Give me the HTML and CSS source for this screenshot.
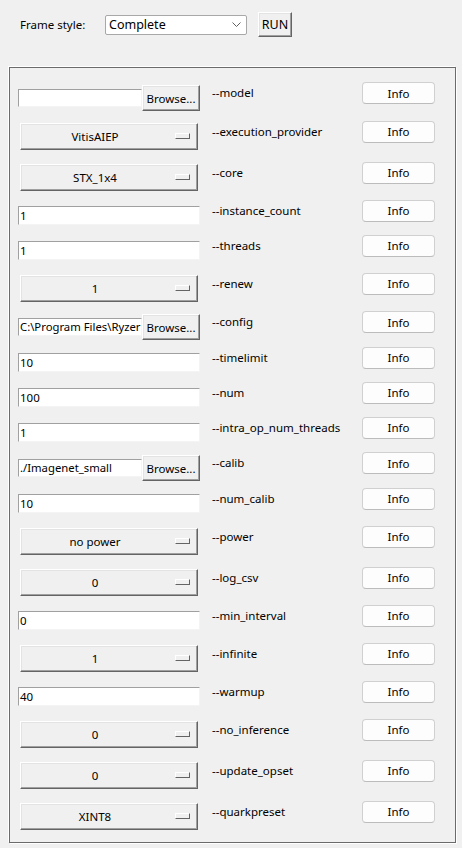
FILE: index.html
```html
<!DOCTYPE html>
<html>
<head>
<meta charset="utf-8">
<link rel="stylesheet" href="styles.css">
</head>
<body>
<div class="header">
  <span class="hlabel">Frame style:</span>
  <div class="combo"><span class="combo-text">Complete</span><svg class="chev" width="9" height="5" viewBox="0 0 9 5"><polyline points="0.5,0.5 4.5,4.5 8.5,0.5" fill="none" stroke="#606060" stroke-width="1"/></svg></div>
  <div class="tkbtn run">RUN</div>
</div>
<div class="frame">
  <div class="row row-b"><div class="left"><div class="filepick"><div class="entry short"></div><div class="tkbtn browse">Browse...</div></div></div><div class="arg">--model</div><div class="info">Info</div></div>
  <div class="row row-o"><div class="left"><div class="optmenu"><span class="opt-text">VitisAIEP</span><span class="ind"></span></div></div><div class="arg">--execution_provider</div><div class="info">Info</div></div>
  <div class="row row-o"><div class="left"><div class="optmenu"><span class="opt-text">STX_1x4</span><span class="ind"></span></div></div><div class="arg">--core</div><div class="info">Info</div></div>
  <div class="row row-e"><div class="left"><div class="entry">1</div></div><div class="arg">--instance_count</div><div class="info">Info</div></div>
  <div class="row row-e"><div class="left"><div class="entry">1</div></div><div class="arg">--threads</div><div class="info">Info</div></div>
  <div class="row row-o"><div class="left"><div class="optmenu"><span class="opt-text">1</span><span class="ind"></span></div></div><div class="arg">--renew</div><div class="info">Info</div></div>
  <div class="row row-b"><div class="left"><div class="filepick"><div class="entry short">C:\Program Files\Ryzer</div><div class="tkbtn browse">Browse...</div></div></div><div class="arg">--config</div><div class="info">Info</div></div>
  <div class="row row-e"><div class="left"><div class="entry">10</div></div><div class="arg">--timelimit</div><div class="info">Info</div></div>
  <div class="row row-e"><div class="left"><div class="entry">100</div></div><div class="arg">--num</div><div class="info">Info</div></div>
  <div class="row row-e"><div class="left"><div class="entry">1</div></div><div class="arg">--intra_op_num_threads</div><div class="info">Info</div></div>
  <div class="row row-b"><div class="left"><div class="filepick"><div class="entry short">./Imagenet_small</div><div class="tkbtn browse">Browse...</div></div></div><div class="arg">--calib</div><div class="info">Info</div></div>
  <div class="row row-e"><div class="left"><div class="entry">10</div></div><div class="arg">--num_calib</div><div class="info">Info</div></div>
  <div class="row row-o"><div class="left"><div class="optmenu"><span class="opt-text">no power</span><span class="ind"></span></div></div><div class="arg">--power</div><div class="info">Info</div></div>
  <div class="row row-o"><div class="left"><div class="optmenu"><span class="opt-text">0</span><span class="ind"></span></div></div><div class="arg">--log_csv</div><div class="info">Info</div></div>
  <div class="row row-e"><div class="left"><div class="entry">0</div></div><div class="arg">--min_interval</div><div class="info">Info</div></div>
  <div class="row row-o"><div class="left"><div class="optmenu"><span class="opt-text">1</span><span class="ind"></span></div></div><div class="arg">--infinite</div><div class="info">Info</div></div>
  <div class="row row-e"><div class="left"><div class="entry">40</div></div><div class="arg">--warmup</div><div class="info">Info</div></div>
  <div class="row row-o"><div class="left"><div class="optmenu"><span class="opt-text">0</span><span class="ind"></span></div></div><div class="arg">--no_inference</div><div class="info">Info</div></div>
  <div class="row row-o"><div class="left"><div class="optmenu"><span class="opt-text">0</span><span class="ind"></span></div></div><div class="arg">--update_opset</div><div class="info">Info</div></div>
  <div class="row row-o"><div class="left"><div class="optmenu"><span class="opt-text">XINT8</span><span class="ind"></span></div></div><div class="arg">--quarkpreset</div><div class="info">Info</div></div>
</div>
</body>
</html>
```

FILE: styles.css
```css
html, body {
  margin: 0;
  padding: 0;
}
body {
  background: #f0f0f0;
  font-family: "Noto Sans", "DejaVu Sans", sans-serif;
  font-size: 11.5px;
  color: #000;
  width: 462px;
  height: 848px;
  overflow: hidden;
}
.header {
  display: flex;
  align-items: center;
  height: 25px;
  margin-top: 12px;
  padding-left: 20px;
}
.hlabel {
  width: 85px;
  line-height: 16px;
}
.combo {
  box-sizing: border-box;
  width: 142px;
  height: 20px;
  background: #fff;
  border: 1px solid #a8a8a8;
  border-radius: 2px;
  display: flex;
  align-items: center;
  padding-left: 3px;
  padding-right: 5px;
}
.combo-text {
  flex: 1;
  font-size: 12.5px;
}
.chev {
  display: block;
}
.tkbtn {
  box-sizing: border-box;
  background: #f0f0f0;
  border: 1px solid;
  border-color: #ffffff #646464 #646464 #ffffff;
  box-shadow: inset -1px -1px 0 #a0a0a0, inset 1px 1px 0 #e3e3e3;
  display: flex;
  align-items: center;
  justify-content: center;
}
.run {
  width: 34px;
  height: 25px;
  margin-left: 11px;
  font-size: 12.5px;
}
.frame {
  box-sizing: border-box;
  margin-top: 30px;
  margin-left: 9px;
  width: 447px;
  height: 776px;
  border: 1px solid #6b6b6b;
  box-shadow: -1px -1px 0 #ffffff, 1px 1px 0 #ffffff;
  padding-top: 7px;
  padding-left: 8px;
}
.row {
  display: flex;
  align-items: center;
}
.row-b { height: 36px; }
.row-o { height: 41px; }
.row-e { height: 35px; }
.left {
  width: 182px;
  margin-top: 10px;
  display: flex;
}
.arg {
  width: 150px;
  margin-left: 12px;
  line-height: 16px;
}
.info {
  box-sizing: border-box;
  width: 73px;
  height: 22px;
  background: #fdfdfd;
  border: 1px solid #d0d0d0;
  border-bottom-color: #bcbcbc;
  border-radius: 4px;
  display: flex;
  align-items: center;
  justify-content: center;
}
.entry {
  box-sizing: border-box;
  width: 182px;
  height: 19px;
  background: #fff;
  border-top: 1px solid #a0a0a0;
  border-left: 1px solid #a0a0a0;
  border-right: 1px solid #f4f4f4;
  border-bottom: 1px solid #f4f4f4;
  padding-left: 1px;
  line-height: 17px;
  white-space: nowrap;
  overflow: hidden;
}
.filepick {
  display: flex;
  align-items: center;
}
.entry.short {
  width: 124px;
  height: 18px;
  line-height: 16px;
  font-size: 11.3px;
}
.browse {
  width: 58px;
  height: 26px;
}
.optmenu {
  box-sizing: border-box;
  width: 178px;
  height: 27px;
  margin: 0 2px;
  background: #f0f0f0;
  border: 1px solid;
  border-color: #ffffff #646464 #646464 #ffffff;
  box-shadow: inset -1px -1px 0 #a0a0a0, inset 1px 1px 0 #e3e3e3;
  display: flex;
  align-items: center;
  padding-left: 1px;
  padding-right: 6px;
}
.opt-text {
  width: 146px;
  text-align: center;
  margin-right: 7px;
}
.ind {
  box-sizing: border-box;
  width: 15px;
  height: 6px;
  border: 1px solid;
  border-color: #ffffff #646464 #646464 #ffffff;
  background: #f0f0f0;
  margin-top: -1px;
}
```
